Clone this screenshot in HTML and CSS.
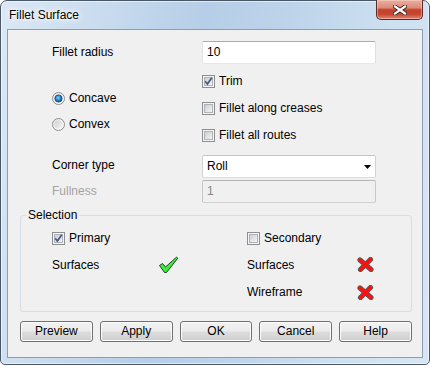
FILE: index.html
```html
<!DOCTYPE html>
<html lang="en">

<head>
    <meta charset="UTF-8">
    <title>Fillet Surface</title>
    <link rel="stylesheet" href="styles.css">
</head>

<body>
    <svg class="defs" width="0" height="0">
        <defs>
            <linearGradient id="cbIn" x1="0" y1="0" x2="1" y2="1">
                <stop offset="0" stop-color="#c9ccd2" />
                <stop offset="1" stop-color="#f7f7f7" />
            </linearGradient>
            <linearGradient id="rdOut" x1="0" y1="0" x2="1" y2="1">
                <stop offset="0" stop-color="#e2e2e2" />
                <stop offset="1" stop-color="#ffffff" />
            </linearGradient>
            <linearGradient id="rdIn" x1="0" y1="0" x2="1" y2="1">
                <stop offset="0" stop-color="#cfcfcf" />
                <stop offset="1" stop-color="#f6f6f6" />
            </linearGradient>
            <radialGradient id="rdDot" cx="0.45" cy="0.4" r="0.6">
                <stop offset="0" stop-color="#8fd3fb" />
                <stop offset="0.5" stop-color="#2f8fd8" />
                <stop offset="1" stop-color="#0f4d91" />
            </radialGradient>
        </defs>
    </svg>

    <div class="window">
        <div class="titlebar">
            <span class="title">Fillet Surface</span>
            <div class="close">
                <svg width="14" height="10" viewBox="0 0 14 10">
                    <path d="M2 1.5 L12 8.5 M12 1.5 L2 8.5" stroke="#3b2420" stroke-width="4" stroke-linecap="square" fill="none" />
                    <path d="M2 1.5 L12 8.5 M12 1.5 L2 8.5" stroke="#ffffff" stroke-width="2.2" stroke-linecap="square" fill="none" />
                </svg>
            </div>
        </div>

        <div class="client">
            <div class="form">
                <div class="lbl">Fillet radius</div>
                <div class="textbox">10</div>

                <div class="radios">
                    <div class="opt">
                        <svg class="box" width="13" height="13" viewBox="0 0 13 13">
                            <circle cx="6.5" cy="6.5" r="6" fill="url(#rdOut)" stroke="#8e8f8f" />
                            <circle cx="6.5" cy="6.5" r="3.6" fill="url(#rdDot)" stroke="#1d3f6a" stroke-width="0.8" />
                        </svg>
                        <span>Concave</span>
                    </div>
                    <div class="opt">
                        <svg class="box" width="13" height="13" viewBox="0 0 13 13">
                            <circle cx="6.5" cy="6.5" r="6" fill="url(#rdOut)" stroke="#8e8f8f" />
                            <circle cx="6.5" cy="6.5" r="4" fill="url(#rdIn)" />
                        </svg>
                        <span>Convex</span>
                    </div>
                </div>
                <div class="checks">
                    <div class="opt">
                        <svg class="box" width="13" height="13" viewBox="0 0 13 13">
                            <rect x="0.5" y="0.5" width="12" height="12" fill="#f4f4f4" stroke="#8e8f8f" />
                            <rect x="2.5" y="2.5" width="8" height="8" fill="url(#cbIn)" stroke="#b0b4ba" />
                            <path d="M3.2 6.3 L5.4 9 L9.8 2.8" stroke="#44598a" stroke-width="1.7" fill="none" />
                        </svg>
                        <span>Trim</span>
                    </div>
                    <div class="opt">
                        <svg class="box" width="13" height="13" viewBox="0 0 13 13">
                            <rect x="0.5" y="0.5" width="12" height="12" fill="#f4f4f4" stroke="#8e8f8f" />
                            <rect x="2.5" y="2.5" width="8" height="8" fill="url(#cbIn)" stroke="#b0b4ba" />
                        </svg>
                        <span>Fillet along creases</span>
                    </div>
                    <div class="opt">
                        <svg class="box" width="13" height="13" viewBox="0 0 13 13">
                            <rect x="0.5" y="0.5" width="12" height="12" fill="#f4f4f4" stroke="#8e8f8f" />
                            <rect x="2.5" y="2.5" width="8" height="8" fill="url(#cbIn)" stroke="#b0b4ba" />
                        </svg>
                        <span>Fillet all routes</span>
                    </div>
                </div>

                <div class="lbl corner-lbl">Corner type</div>
                <div class="combo corner-field">
                    <span>Roll</span>
                    <svg width="7" height="4" viewBox="0 0 7 4">
                        <path d="M0 0 H7 L3.5 4 Z" fill="#000" />
                    </svg>
                </div>

                <div class="lbl disabled fullness-lbl">Fullness</div>
                <div class="textbox off fullness-field">1</div>
            </div>

            <fieldset class="group">
                <legend>Selection</legend>
                <div class="sel">
                    <div class="opt span2">
                        <svg class="box" width="13" height="13" viewBox="0 0 13 13">
                            <rect x="0.5" y="0.5" width="12" height="12" fill="#f4f4f4" stroke="#8e8f8f" />
                            <rect x="2.5" y="2.5" width="8" height="8" fill="url(#cbIn)" stroke="#b0b4ba" />
                            <path d="M3.2 6.3 L5.4 9 L9.8 2.8" stroke="#44598a" stroke-width="1.7" fill="none" />
                        </svg>
                        <span>Primary</span>
                    </div>
                    <div class="opt span2">
                        <svg class="box" width="13" height="13" viewBox="0 0 13 13">
                            <rect x="0.5" y="0.5" width="12" height="12" fill="#f4f4f4" stroke="#8e8f8f" />
                            <rect x="2.5" y="2.5" width="8" height="8" fill="url(#cbIn)" stroke="#b0b4ba" />
                        </svg>
                        <span>Secondary</span>
                    </div>

                    <div class="cell">Surfaces</div>
                    <div class="cell">
                        <svg class="tick" width="21" height="18" viewBox="0 0 21 18">
                            <path d="M1.5 9.5 L4.5 7.5 L7.5 11 L18.5 1.2 L19.8 2.2 L8.5 16.5 L6.5 16.5 Z" fill="#35f035" stroke="#2b3b2b" stroke-width="1" stroke-linejoin="round" />
                        </svg>
                    </div>
                    <div class="cell">Surfaces</div>
                    <div class="cell">
                        <svg class="cross" width="17" height="15" viewBox="0 0 17 15">
                            <path d="M3 3 L14 12.5 M13.5 2.5 L3.5 12.5" stroke="#5a5a5a" stroke-width="5.2" stroke-linecap="round" fill="none" />
                            <path d="M3 3 L14 12.5 M13.5 2.5 L3.5 12.5" stroke="#ff1010" stroke-width="3.4" stroke-linecap="round" fill="none" />
                        </svg>
                    </div>

                    <div class="cell"></div>
                    <div class="cell"></div>
                    <div class="cell">Wireframe</div>
                    <div class="cell">
                        <svg class="cross" width="17" height="15" viewBox="0 0 17 15">
                            <path d="M3 3 L14 12.5 M13.5 2.5 L3.5 12.5" stroke="#5a5a5a" stroke-width="5.2" stroke-linecap="round" fill="none" />
                            <path d="M3 3 L14 12.5 M13.5 2.5 L3.5 12.5" stroke="#ff1010" stroke-width="3.4" stroke-linecap="round" fill="none" />
                        </svg>
                    </div>
                </div>
            </fieldset>

            <div class="buttons">
                <div class="btn">Preview</div>
                <div class="btn">Apply</div>
                <div class="btn">OK</div>
                <div class="btn">Cancel</div>
                <div class="btn">Help</div>
            </div>
        </div>
    </div>
</body>

</html>
```

FILE: styles.css
```css
* {
    margin: 0;
    padding: 0;
    box-sizing: border-box;
}

body {
    width: 430px;
    height: 365px;
    font-family: "Liberation Sans", Arial, sans-serif;
    font-size: 12px;
    line-height: 15px;
    color: #000;
    background: #fff;
}

.defs {
    position: absolute;
}

.window {
    width: 430px;
    height: 365px;
    display: flex;
    flex-direction: column;
    padding: 0 6px 6px;
    border: 1px solid #4a5766;
    border-radius: 7px 7px 5px 5px;
    box-shadow: inset 0 0 0 1px rgba(255, 255, 255, 0.55);
    background: linear-gradient(100deg, #dbe8f5 0%, #cadcef 20%, #b6cee7 42%, #bdd3ea 58%, #cde0f1 80%, #d7e6f4 100%);
}

/* title bar */
.titlebar {
    height: 28px;
    display: flex;
    justify-content: space-between;
    align-items: flex-start;
}

.title {
    padding-left: 2px;
    margin-top: 7px;
    text-shadow: 0 0 6px #fff, 0 0 10px #fff, 0 0 3px #fff;
}

.close {
    width: 47px;
    height: 20px;
    margin-top: -1px;
    display: flex;
    align-items: center;
    justify-content: center;
    border: 1px solid #5a2a24;
    border-top: none;
    border-radius: 0 0 5px 5px;
    background: linear-gradient(#eab0a3 0%, #dc8c79 40%, #c3432c 52%, #c6462e 75%, #dd8a76 100%);
    box-shadow: inset 0 0 0 1px rgba(255, 220, 210, 0.45);
}

/* client area */
.client {
    flex: 1;
    background: #f0f0f0;
    border: 1px solid #8e9daf;
}

.form {
    display: grid;
    grid-template-columns: 150px 174px;
    padding-left: 44px;
    margin-top: 11px;
}

.lbl {
    display: flex;
    align-items: center;
    height: 23px;
}

.disabled {
    color: #a3a3a3;
}

.textbox {
    height: 23px;
    padding: 0 4px;
    display: flex;
    align-items: center;
    background: #fff;
    border: 1px solid;
    border-color: #abadb3 #dbdfe6 #e3e9ef #e2e3ea;
    border-radius: 2px;
}

.textbox.off {
    background: #f0f0f0;
    color: #858585;
    border-color: #b4b4b4 #c8c8c8 #cfcfcf #c8c8c8;
}

.radios {
    padding-top: 17px;
    margin-top: 4px;
}

.radios .opt {
    height: 26px;
}

.checks {
    margin-top: 4px;
}

.checks .opt {
    height: 27px;
}

.opt {
    display: flex;
    align-items: center;
}

.opt .box {
    margin-right: 4px;
    flex: none;
}

.combo {
    height: 23px;
    padding: 0 4px 0 4px;
    display: flex;
    align-items: center;
    justify-content: space-between;
    background: #fff;
    border: 1px solid;
    border-color: #c5c5c5 #d3d3d3 #dcdcdc #d3d3d3;
    border-radius: 2px;
}

.corner-lbl,
.corner-field {
    margin-top: 6px;
}

.corner-lbl {
    padding-bottom: 3px;
}

.fullness-lbl,
.fullness-field {
    margin-top: 2px;
}

/* selection group */
.group {
    width: 392px;
    margin: 5px 0 0 12px;
    padding: 2px 0 5px;
    border: 1px solid #d5dde5;
    border-radius: 3px;
}

.group legend {
    margin-left: 5px;
    padding: 0 2px;
}

.sel {
    display: grid;
    grid-template-columns: 108px 87px 110px auto;
    grid-template-rows: 26px 28px 27px;
    padding-left: 31px;
}

.span2 {
    grid-column: span 2;
}

.cell {
    display: flex;
    align-items: center;
}

.tick {
    margin-left: -2px;
}

.cross {
    margin-top: -1px;
}

/* buttons */
.buttons {
    display: grid;
    grid-template-columns: repeat(5, 1fr);
    column-gap: 7px;
    width: 392px;
    margin: 9px 0 0 12px;
}

.btn {
    height: 21px;
    display: flex;
    align-items: center;
    justify-content: center;
    border: 1px solid #707070;
    border-radius: 3px;
    box-shadow: inset 0 0 0 1px #fcfcfc;
    background: linear-gradient(#f2f2f2 0%, #ebebeb 48%, #dddddd 52%, #cfcfcf 100%);
}
```
